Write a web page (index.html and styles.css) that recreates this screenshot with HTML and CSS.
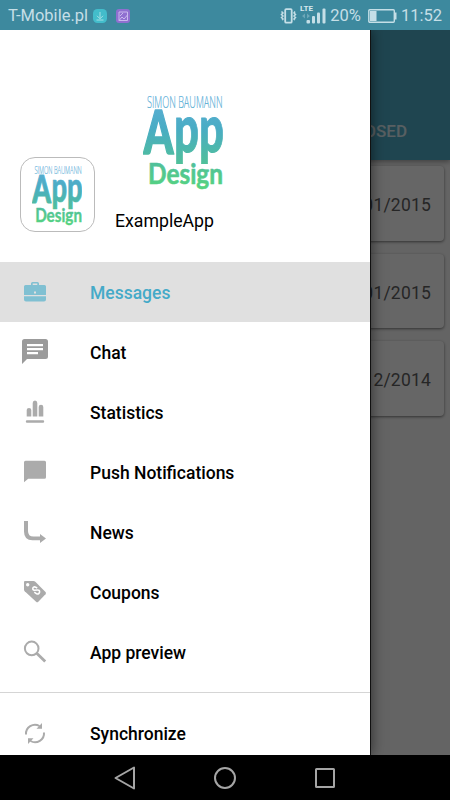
FILE: index.html
```html
<!DOCTYPE html>
<html lang="en">
<head>
    <meta charset="UTF-8">
    <meta name="viewport" content="width=device-width, initial-scale=1.0">
    <title>ExampleApp</title>
    <link rel="stylesheet" href="styles.css">
</head>
<body>
    <svg class="defs" width="0" height="0">
        <defs>
            <linearGradient id="logoFill" gradientUnits="userSpaceOnUse" x1="0" y1="0" x2="0" y2="96">
                <stop offset="0" stop-color="#5fafd8"/>
                <stop offset="0.35" stop-color="#49acc4"/>
                <stop offset="0.7" stop-color="#50bf9c"/>
                <stop offset="1" stop-color="#55d57c"/>
            </linearGradient>
            <symbol id="logo" viewBox="0 0 80 96">
                <g fill="url(#logoFill)" stroke="url(#logoFill)" stroke-linejoin="round">
                    <text class="logo-name" x="4" y="12.5" textLength="75.5" lengthAdjust="spacingAndGlyphs">SIMON BAUMANN</text>
                    <text class="logo-app" x="0.5" y="59" textLength="30" lengthAdjust="spacingAndGlyphs">A</text>
                    <text class="logo-pp" x="31" y="57" textLength="50" lengthAdjust="spacingAndGlyphs">pp</text>
                    <text class="logo-design" x="5" y="89" textLength="75" lengthAdjust="spacingAndGlyphs">Design</text>
                </g>
            </symbol>
        </defs>
    </svg>

    <div class="screen">
        <header class="status-bar">
            <span class="carrier">T-Mobile.pl</span>
            <svg class="badge" viewBox="0 0 14 14">
                <rect width="14" height="14" rx="4.5" fill="#43bdcb"/>
                <path d="M7 3v6.5M4 6.8l3 3 3-3M3.5 11h7" fill="none" stroke="#a5dfe5"/>
            </svg>
            <svg class="badge" viewBox="0 0 14 14">
                <rect width="14" height="14" rx="3" fill="#8f6fd0"/>
                <path d="M3 3h8.5v8.5h-8.5zM3 11.5l3-3.5 2 2 3.5-4M4 7l3-3" fill="none" stroke="#c9b9ee"/>
            </svg>
            <div class="status-right">
                <svg class="status-icons" viewBox="0 0 46 24">
                    <g fill="none" stroke="#c5dfe7">
                        <rect x="5.2" y="5.2" width="6.5" height="13.5" rx="1" stroke-width="1.8"/>
                        <path d="M1.5 7.5l1.5 1.5-1.5 1.5 1.5 1.5-1.5 1.5 1.5 1.5-1 1M15 7.5l-1 1.5 1.5 1.5-1.5 1.5 1.5 1.5-1.5 1.5 1 1" stroke-width="1.5"/>
                    </g>
                    <text class="lte" x="20" y="7.2" textLength="13" lengthAdjust="spacingAndGlyphs">LTE</text>
                    <g fill="#c5dfe7">
                        <rect x="26.5" y="16" width="3.5" height="3.5" rx="1"/>
                        <rect x="32" y="12" width="3" height="7.5" rx="1"/>
                        <rect x="37" y="8.5" width="3" height="11" rx="1"/>
                        <rect x="42.5" y="4.5" width="3" height="15" rx="1"/>
                        <path d="M22 12l3-2.5v5zM30 12l-3-2.5v5z" opacity=".35"/>
                    </g>
                </svg>
                <span>20%</span>
                <svg class="battery" viewBox="0 0 29 14">
                    <rect x=".8" y=".8" width="25.5" height="12.4" rx="1" fill="none" stroke="#c5dfe7" stroke-width="1.4"/>
                    <rect x="2" y="2" width="6.5" height="10" fill="#c5dfe7"/>
                    <rect x="27" y="3.5" width="1.5" height="7" fill="#c5dfe7"/>
                </svg>
                <span class="clock">11:52</span>
            </div>
        </header>

        <div class="content">
            <main class="page">
                <div class="toolbar"><span>CLOSED</span></div>
                <div class="cards">
                    <div class="card">01/01/2015</div>
                    <div class="card">01/01/2015</div>
                    <div class="card"><span class="day">31/1</span>2/2014</div>
                </div>
            </main>

            <div class="scrim"></div>

            <aside class="drawer">
                <div class="profile">
                    <div class="app-icon"><svg class="logo-small"><use href="#logo"/></svg></div>
                    <div class="profile-main">
                        <svg class="logo-large"><use href="#logo"/></svg>
                        <div class="app-name">ExampleApp</div>
                    </div>
                </div>
                <nav class="menu">
                    <a class="item active">
                        <svg class="icon" viewBox="0 0 30 30">
                            <path d="M11 8V6.5Q11 5 12.5 5h5Q19 5 19 6.5V8h5.5Q26 8 26 9.5V18H4V9.5Q4 8 5.5 8zm1.7 0h4.6V6.5h-4.6zm1.3 6.5v2h2v-2zM4 19.3h22v3.2Q26 24.5 24 24.5H6q-2 0-2-2z" fill-rule="evenodd"/>
                        </svg>
                        <span>Messages</span>
                    </a>
                    <a class="item">
                        <svg class="icon chat" viewBox="0 0 30 30">
                            <path d="M4.5 2h21Q28 2 28 4.5v15Q28 22 25.5 22H7l-5 5V4.5Q2 2 4.5 2zM7 7v2.3h16V7zm0 4v2.3h16V11zm0 4v2.3h11V15z" fill-rule="evenodd"/>
                        </svg>
                        <span>Chat</span>
                    </a>
                    <a class="item">
                        <svg class="icon" viewBox="0 0 30 30">
                            <path d="M6.7 19.5V13q0-2 2.3-2t2.3 2v6.5zM12.7 19.5V6q0-2.5 2.3-2.5T17.3 6v13.5zM18.7 19.5V10q0-2.200 2.3-2.200t2.3 2.200v9.5zM7 23.300h16a1.200 1.200 0 0 1 0 2.400H7a1.200 1.200 0 0 1 0-2.400z"/>
                        </svg>
                        <span>Statistics</span>
                    </a>
                    <a class="item">
                        <svg class="icon" viewBox="0 0 30 30">
                            <path d="M5.5 3.7h19q1.5 0 1.5 1.5v15q0 1.5-1.5 1.5H8.2L4 25.3V5.2q0-1.5 1.5-1.5z"/>
                        </svg>
                        <span>Push Notifications</span>
                    </a>
                    <a class="item">
                        <svg class="icon" viewBox="0 0 30 30">
                            <path d="M4 4h4v10q0 5.5 5.5 5.5H20V17l6 4.5-6 4.5v-2.7h-7.5Q4 23.3 4 14.5z"/>
                        </svg>
                        <span>News</span>
                    </a>
                    <a class="item">
                        <svg class="icon" viewBox="0 0 30 30">
                            <path d="M5 4h8.5q1 0 1.8.7l10.2 10.4q1 1.1 0 2.2l-7.2 7.5q-1.1 1-2.2 0L4.7 14.2Q4 13.5 4 12.5V5q0-1 1-1z"/>
                            <circle cx="7.7" cy="7.7" r="1.7" fill="#fff"/>
                            <path d="M17.2 11.2l-1.5-1q-2-1-2.8.8-.5 2 1.5 2.2l3-.2q2.3-.1 2.2 2-.5 2.5-3 1.8l-2.3-1.7" fill="none" stroke="#fff" stroke-width="1.6"/>
                        </svg>
                        <span>Coupons</span>
                    </a>
                    <a class="item">
                        <svg class="icon line" viewBox="0 0 30 30">
                            <circle cx="11.7" cy="11.4" r="6.8" stroke-width="2"/>
                            <path d="M16.7 16.3l8.500 8.3" stroke-width="2.8"/>
                        </svg>
                        <span>App preview</span>
                    </a>
                    <a class="item sync">
                        <svg class="icon line" viewBox="0 0 30 30">
                            <path d="M6 15.5A9 9 0 0 1 19.5 7M24 13.5A9 9 0 0 1 10.5 22" stroke-width="2"/>
                            <path class="tips" d="M22 4V9.8H16.5zM8 25v-5.800h5.5z"/>
                        </svg>
                        <span>Synchronize</span>
                    </a>
                </nav>
            </aside>
        </div>

        <footer class="nav-bar">
            <svg viewBox="0 0 24 24"><path d="M21 1.5v21L2.5 12z"/></svg>
            <svg viewBox="0 0 24 24"><circle cx="12" cy="12" r="10"/></svg>
            <svg viewBox="0 0 24 24"><rect x="3" y="3" width="18" height="18" rx=".5"/></svg>
        </footer>
    </div>
</body>
</html>
```
FILE: styles.css
```css
body {
    margin: 0;
    font-family: Roboto, sans-serif;
    background: #000;
}
.defs {
    position: absolute;
}
.screen {
    width: 450px;
    height: 800px;
    display: flex;
    flex-direction: column;
    overflow: hidden;
}

/* status bar */
.status-bar {
    box-sizing: border-box;
    height: 30px;
    padding: 1px 8px 0 8px;
    display: flex;
    align-items: center;
    background: #3d899e;
    color: #c5dfe7;
    font-size: 16.5px;
}
.carrier {
    width: 79px;
    margin-right: 6px;
    white-space: nowrap;
}
.badge {
    width: 14px;
    height: 14px;
    margin-right: 9px;
}
.status-right {
    display: flex;
    align-items: center;
    margin-left: auto;
}
.status-icons {
    width: 46px;
    height: 24px;
    margin-right: 4px;
}
.lte {
    font: bold 7px Roboto, sans-serif;
    fill: #d5e8ed;
}
.battery {
    width: 29px;
    height: 14px;
    margin: 0 4px 0 7px;
}
.clock {
    font-size: 16.5px;
}

/* page behind the drawer */
.content {
    position: relative;
    height: 725px;
    overflow: hidden;
}
.page {
    height: 100%;
    background: #fafafa;
}
.toolbar {
    height: 130px;
    box-sizing: border-box;
    padding: 91px 43px 0 0;
    background: #4eadc8;
    color: #fff;
    font-size: 17px;
    font-weight: 500;
    line-height: 20px;
    text-align: right;
    box-shadow: 0 2px 5px rgba(0, 0, 0, 0.35);
}
.toolbar span {
    opacity: 0.8;
}
.cards {
    padding: 6px;
    display: flex;
    flex-direction: column;
    gap: 13px;
}
.card {
    height: 74.5px;
    box-sizing: border-box;
    padding-right: 13px;
    border-radius: 4px;
    background: #fff;
    color: #606060;
    font-size: 17.5px;
    line-height: 79px;
    letter-spacing: 0.2px;
    text-align: right;
    box-shadow: 0 1px 3px rgba(0, 0, 0, 0.5);
}
.day {
    margin-right: 2px;
}
.scrim {
    position: absolute;
    inset: 0;
    background: rgba(0, 0, 0, 0.6);
}

/* drawer */
.drawer {
    position: absolute;
    top: 0;
    left: 0;
    width: 370px;
    height: 100%;
    background: #fff;
    box-shadow: 1px 0 0 #111, 2px 0 12px rgba(0, 0, 0, 0.5);
}
.profile {
    height: 232px;
    box-sizing: border-box;
    padding: 65px 0 0 20px;
    display: flex;
    align-items: flex-start;
    gap: 20px;
}
.app-icon {
    box-sizing: border-box;
    width: 75px;
    height: 75px;
    margin-top: 62px;
    padding: 2px 2px 0 0;
    border: 1px solid #bbb;
    border-radius: 15px;
    display: flex;
    align-items: center;
    justify-content: center;
}
.logo-small {
    width: 50px;
    height: 60px;
}
.logo-large {
    display: block;
    width: 80px;
    height: 96px;
    margin: 0 0 19px 28px;
}
.logo-name {
    font: 300 16px "Open Sans", sans-serif;
    stroke-width: 0.2;
}
.logo-app {
    font: 900 60px Lato, sans-serif;
    stroke-width: 1.6;
}
.logo-pp {
    font: 900 67px Lato, sans-serif;
    stroke-width: 1;
}
.logo-design {
    font: bold 29px Lato, sans-serif;
    stroke-width: 0.6;
}
.app-name {
    color: #000;
    font-size: 17.7px;
    line-height: 22px;
}
.item {
    box-sizing: border-box;
    height: 60px;
    padding: 0 20px;
    display: flex;
    align-items: center;
    gap: 40px;
    color: #000;
    font-size: 17.5px;
    font-weight: 500;
}
.item span {
    padding-top: 2px;
}
.item.active {
    background: #e0e0e0;
    color: #45aac8;
}
.item.sync {
    height: 82px;
    margin-top: 10px;
    border-top: 1px solid #d5d5d5;
}
.item.sync span {
    padding-top: 0;
}
.icon {
    width: 30px;
    height: 30px;
    fill: #ababab;
}
.item.active .icon {
    fill: #80c0d2;
}
.icon.chat {
    fill: #9b9b9b;
}
.icon.line {
    fill: none;
    stroke: #ababab;
}
.icon .tips {
    fill: #ababab;
    stroke: none;
}

/* system navigation */
.nav-bar {
    height: 45px;
    display: flex;
    align-items: center;
    justify-content: center;
    gap: 76px;
    background: #000;
}
.nav-bar svg {
    width: 24px;
    height: 24px;
    fill: none;
    stroke: #a5a5a5;
    stroke-width: 2;
    stroke-linejoin: round;
}
```
